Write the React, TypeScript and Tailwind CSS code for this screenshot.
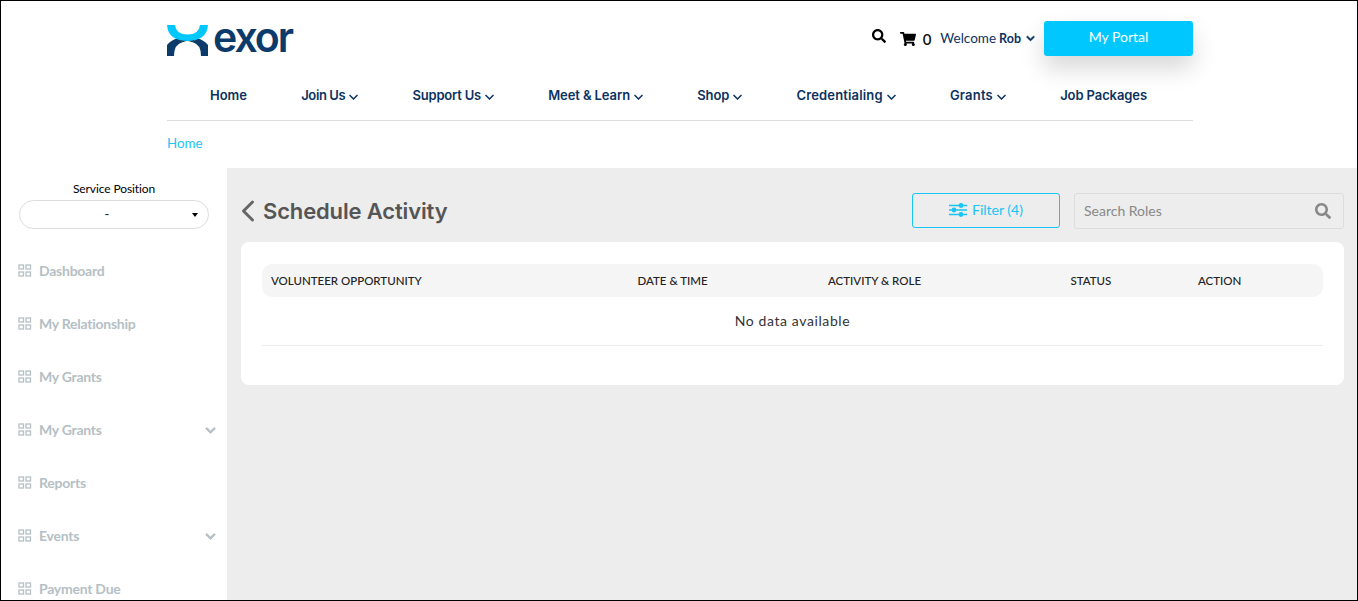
import { ChevronLeft } from "lucide-react";
import { FaChevronDown, FaSearch, FaShoppingCart } from "react-icons/fa";

const navy = "text-[#0b3261]";

const navItems = [
  { label: "Home", track: "tracking-[0px]" },
  { label: "Join Us", caret: true, track: "tracking-[-0.4px]" },
  { label: "Support Us", caret: true, track: "tracking-[-0.2px]" },
  { label: "Meet & Learn", caret: true, track: "tracking-[-0.1px]" },
  { label: "Shop", caret: true, track: "tracking-[-0.1px]" },
  { label: "Credentialing", caret: true, track: "tracking-[0.15px]" },
  { label: "Grants", caret: true, track: "tracking-[0.2px]" },
  { label: "Job Packages", track: "tracking-[-0.1px]" },
];

const sideItems = [
  { label: "Dashboard" },
  { label: "My Relationship" },
  { label: "My Grants" },
  { label: "My Grants", caret: true },
  { label: "Reports" },
  { label: "Events", caret: true },
  { label: "Payment Due" },
];

function Logo() {
  return (
    <div className="flex h-[31px] items-center">
      <svg width="42" height="31" viewBox="0 0 42 31">
        <path d="M0 20 Q4 15 10 13.5 L16 17 Q7 19 7 31 L0 31 Z" fill="#0b3a6b" />
        <path d="M41 20 Q37 15 31 13.5 L25 17 Q34 19 34 31 L41 31 Z" fill="#0b3a6b" />
        <path d="M10 13.5 Q20.500 9 31 13.500 L25 17 Q20.500 15 16 17 Z" fill="#02101f" />
        <path d="M0 0 L8 0 Q9 9.500 20.500 9.500 Q32 9.500 33 0 L41 0 Q40 15.500 20.500 16 Q1 15.500 0 0 Z" fill="#00c8ff" />
      </svg>
      <span className="ml-[4px] mt-[-6px] font-['Inter',sans-serif] text-[41px] font-semibold leading-none tracking-[-2px] text-[#0b3a6b]">
        exor
      </span>
    </div>
  );
}

function GridIcon() {
  return (
    <svg width="14" height="13" viewBox="0 0 14 13" fill="none" stroke="#b5c0c4" strokeWidth="1.300">
      <rect x="1" y="1" width="4.500" height="4" />
      <rect x="8" y="1" width="4.500" height="4" />
      <rect x="1" y="8" width="4.500" height="4" />
      <rect x="8" y="8" width="4.500" height="4" />
    </svg>
  );
}

function FilterIcon() {
  return (
    <svg width="18" height="14" viewBox="0 0 18 14" fill="none" stroke="#19c5f5" strokeWidth="1.400">
      <path d="M0 2.500H18M0 7H18M0 11.500H18" />
      <circle cx="12" cy="2.500" r="1.700" fill="#19c5f5" />
      <circle cx="5" cy="7" r="1.700" fill="#19c5f5" />
      <circle cx="12" cy="11.500" r="1.700" fill="#19c5f5" />
    </svg>
  );
}

function NavCaret() {
  return (
    <svg width="9" height="6" viewBox="0 0 9 6" fill="none" stroke="currentColor" strokeWidth="1.500" className="ml-[4px] mt-[1px]">
      <path d="M0.500 1L4.500 5L8.500 1" />
    </svg>
  );
}

function Header() {
  return (
    <header className="h-[167px] shrink-0 bg-white">
      <div className="ml-[166px] w-[1026px]">
        <div className="flex h-[72px] items-start justify-between">
          <div className="pt-[24px]">
            <Logo />
          </div>
          <div className="flex items-center pt-[20px]">
            <FaSearch size={14} className="mt-[-5px] text-black" />
            <FaShoppingCart size={16} className="ml-[14px] text-black" />
            <span className="ml-[7px] mt-[1px] text-[15px] font-semibold text-[#111]">0</span>
            <span className={`ml-[9px] text-[13.5px] ${navy}`}>Welcome</span>
            <span className={`ml-[3px] mt-[1px] text-[12.5px] font-bold ${navy}`}>Rob</span>
            <FaChevronDown size={9} stroke="currentColor" strokeWidth={40} className="ml-[5px] text-[#0b3261]" />
            <button className="ml-[9px] h-[35px] w-[149px] rounded-[3px] bg-[#00c8ff] pb-[5px] text-[14px] text-white shadow-[0_12px_24px_rgba(0,0,0,0.16)]">
              My Portal
            </button>
          </div>
        </div>
        <nav className="flex h-[48px] items-center justify-between border-b border-[#dedede] pb-[1px] pl-[43px] pr-[46px]">
          {navItems.map((item) => (
            <span
              key={item.label}
              className={`flex items-center font-['Inter',sans-serif] text-[13px] font-[580] ${item.track} ${navy}`}
            >
              {item.label}
              {item.caret && <NavCaret />}
            </span>
          ))}
        </nav>
        <div className="pt-[14px] text-[13.3px] leading-[17px] text-[#19c5f5]">Home</div>
      </div>
    </header>
  );
}

function Sidebar() {
  return (
    <aside className="w-[226px] shrink-0 overflow-hidden bg-white">
      <div className="px-[18px] pt-[14px]">
        <div className="text-center text-[12px] leading-[14px] tracking-[-0.1px] text-black">Service Position</div>
        <div className="relative mt-[4px] flex h-[29px] w-[190px] items-center justify-center rounded-full border border-[#dddddd] pr-[14px] text-[13px] text-[#222]">
          -
          <span className="absolute right-[10px] top-[12px] h-0 w-0 border-x-[3px] border-t-[4px] border-x-transparent border-t-black" />
        </div>
      </div>
      <ul className="mt-[15px]">
        {sideItems.map((item, i) => (
          <li key={i} className="flex h-[53px] items-center pl-[17px] pr-[11px]">
            <GridIcon />
            <span className="ml-[7px] text-[14px] font-bold tracking-[-0.25px] text-[#b5c0c4]">{item.label}</span>
            {item.caret && <FaChevronDown size={11} stroke="currentColor" strokeWidth={40} className="ml-auto mt-[1px] text-[#b5c0c4]" />}
          </li>
        ))}
      </ul>
    </aside>
  );
}

function Main() {
  return (
    <main className="min-w-0 flex-1 bg-[#ededed] pl-[14px] pr-[13px]">
      <div className="flex h-[74px] items-start justify-between pt-[25px]">
        <div className="flex items-center">
          <ChevronLeft size={36} strokeWidth={2} className="ml-[-11px] text-[#666]" />
          <h1 className="ml-[-3px] font-['Inter',sans-serif] text-[22px] font-semibold leading-[36px] tracking-[-0.15px] text-[#555]">
            Schedule Activity
          </h1>
        </div>
        <div className="flex">
          <button className="flex h-[35px] w-[148px] items-center justify-center gap-[5px] rounded-[3px] border border-[#19c5f5] pb-[2px] text-[14px] text-[#19c5f5]">
            <FilterIcon />
            Filter (4)
          </button>
          <div className="ml-[14px] flex h-[36px] w-[270px] items-center justify-between rounded-[3px] border border-[#dcdcdc] pb-[2px] pl-[9px] pr-[12px] text-[14px] text-[#888]">
            Search Roles
            <FaSearch size={16} className="mt-[2px] text-[#888]" />
          </div>
        </div>
      </div>
      <section className="h-[143px] rounded-[8px] bg-white px-[21px] pt-[22px]">
        <div className="grid h-[33px] grid-cols-[366.500px_190.500px_242.500px_127.500px_1fr] items-center rounded-[10px] bg-[#f5f5f5] pl-[9px] text-[11.5px] font-medium text-[#222]">
          <span>VOLUNTEER OPPORTUNITY</span>
          <span>DATE &amp; TIME</span>
          <span>ACTIVITY &amp; ROLE</span>
          <span>STATUS</span>
          <span>ACTION</span>
        </div>
        <div className="flex h-[49px] items-center justify-center border-b border-[#ececec] pb-[2px] text-[14px] tracking-[0.6px] text-[#333]">
          No data available
        </div>
      </section>
    </main>
  );
}

export default function App() {
  return (
    <div className="flex h-[601px] w-[1358px] flex-col overflow-hidden border border-black font-['Lato',sans-serif]">
      <Header />
      <div className="flex min-h-0 flex-1">
        <Sidebar />
        <Main />
      </div>
    </div>
  );
}
